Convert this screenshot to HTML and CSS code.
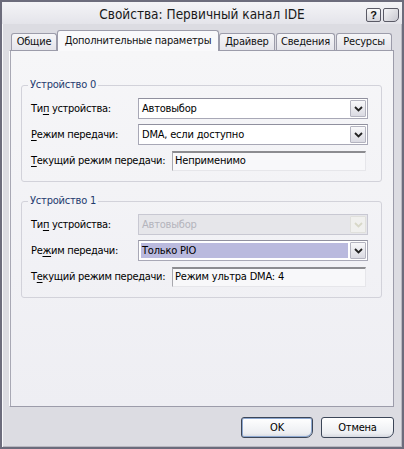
FILE: index.html
```html
<!DOCTYPE html>
<html lang="ru">
<head>
<meta charset="utf-8">
<title>Свойства: Первичный канал IDE</title>
<link rel="stylesheet" href="styles.css">
</head>
<body>
<div class="window">
  <div class="titlebar">
    <span></span>
    <span class="title">Свойства: Первичный канал IDE</span>
    <span class="tb-buttons">
      <span class="tb-btn help">?</span>
      <span class="tb-btn close"></span>
    </span>
  </div>
  <div class="tabs">
    <div class="tab">Общие</div>
    <div class="tab active">Дополнительные параметры</div>
    <div class="tab">Драйвер</div>
    <div class="tab">Сведения</div>
    <div class="tab">Ресурсы</div>
  </div>
  <div class="panel">
    <fieldset class="group">
      <legend>Устройство 0</legend>
      <div class="row">
        <span class="label">Ти<u>п</u> устройства:</span>
        <div class="combo"><span class="value">Автовыбор</span><span class="drop"><svg width="9" height="6" viewBox="0 0 9 6"><path d="M1 1 L4.5 4.5 L8 1" fill="none" stroke="#222" stroke-width="1.8"/></svg></span></div>
      </div>
      <div class="row">
        <span class="label"><u>Р</u>ежим передачи:</span>
        <div class="combo"><span class="value">DMA, если доступно</span><span class="drop"><svg width="9" height="6" viewBox="0 0 9 6"><path d="M1 1 L4.5 4.5 L8 1" fill="none" stroke="#222" stroke-width="1.8"/></svg></span></div>
      </div>
      <div class="row">
        <span class="label wide"><u>Т</u>екущий режим передачи:</span>
        <div class="field">Неприменимо</div>
      </div>
    </fieldset>
    <fieldset class="group">
      <legend>Устройство 1</legend>
      <div class="row">
        <span class="label">Ти<u>п</u> устройства:</span>
        <div class="combo disabled"><span class="value">Автовыбор</span><span class="drop"><svg width="9" height="6" viewBox="0 0 9 6"><path d="M1 1 L4.5 4.5 L8 1" fill="none" stroke="#d8d8c8" stroke-width="1.8"/></svg></span></div>
      </div>
      <div class="row">
        <span class="label">Ре<u>ж</u>им передачи:</span>
        <div class="combo selected"><span class="value">Только PIO</span><span class="drop"><svg width="9" height="6" viewBox="0 0 9 6"><path d="M1 1 L4.5 4.5 L8 1" fill="none" stroke="#222" stroke-width="1.8"/></svg></span></div>
      </div>
      <div class="row">
        <span class="label wide">Т<u>е</u>кущий режим передачи:</span>
        <div class="field">Режим ультра DMA: 4</div>
      </div>
    </fieldset>
  </div>
  <div class="buttons">
    <div class="btn default">OK</div>
    <div class="btn">Отмена</div>
  </div>
</div>
</body>
</html>
```

FILE: styles.css
```css
* { box-sizing: border-box; }
html, body { margin: 0; padding: 0; background: #fff; }
body { font-family: "DejaVu Sans Condensed", "Liberation Sans", Arial, sans-serif; font-size: 11px; color: #000; letter-spacing: -0.2px; }

.window {
  width: 404px;
  height: 449px;
  border: 2px solid #6c6c7c;
  box-shadow: inset 1px 1px 0 #fafafc, inset -1px -1px 0 #b8b8c0;
  background: #dcdce2;
  display: flex;
  flex-direction: column;
  padding: 0 8px 0 7px;
}

.titlebar {
  height: 22px;
  margin: 0 -8px 0 -7px;
  display: grid;
  grid-template-columns: 1fr auto 1fr;
  align-items: center;
  background: linear-gradient(#f4f4f7, #e4e4ea);
}
.title { font-size: 13.5px; color: #1a1a1a; padding-top: 2px; white-space: nowrap; letter-spacing: 0; }
.tb-buttons { display: flex; justify-content: flex-end; gap: 2px; padding-right: 3px; padding-top: 4px; }
.tb-btn {
  width: 15px; height: 14px;
  border: 1px solid #5a5a66;
  border-radius: 2px;
  background: linear-gradient(#fafafa, #d4d4da);
  font-family: "Liberation Sans", Arial, sans-serif;
  font-weight: bold; font-size: 11px; line-height: 12px;
  text-align: center; color: #111;
  letter-spacing: 0;
}
.tb-btn.close { width: 16px; border-radius: 2px 2px 5px 2px; background: linear-gradient(135deg, #f4f4f6, #c8c8d0); }

.tabs {
  margin-top: 6px;
  height: 20px;
  display: flex;
  align-items: flex-end;
  padding-left: 2px;
  position: relative;
  z-index: 1;
}
.tab {
  height: 17px;
  border: 1px solid #9c9caa;
  border-bottom: none;
  border-radius: 3px 3px 0 0;
  background: linear-gradient(#f6f6f8, #e4e4ea);
  font-size: 11px;
  line-height: 16px;
  color: #111;
  margin-right: 1px;
  white-space: nowrap;
  text-align: center;
  flex: none;
}
.tab:first-child { width: 46px; }
.tab.active {
  height: 21px;
  margin-bottom: -1px;
  width: 162px;
  margin-right: 0;
  background: #f9f9fb;
  line-height: 20px;
  margin-left: -1px;
}
.tab:nth-child(3) { width: 56px; }
.tab:nth-child(4) { width: 59px; }
.tab:nth-child(5) { width: 56px; margin-right: 0; }

.panel {
  height: 357px;
  border: 1px solid #9c9caa;
  border-left-color: #fbfbfd;
  box-shadow: inset 1px 0 0 #a8a8b4;
  background: linear-gradient(#f6f6f8, #eeeef3);
  padding: 27px 11px 0 11px;
}

.group {
  margin: 0 0 12px 0;
  border: 1px solid #d2d2da;
  border-radius: 3px;
  padding: 6px 13px 10px 9px;
  display: flex;
  flex-direction: column;
  gap: 5px;
}
.group legend {
  padding: 0 2px;
  margin-left: -3px;
  font-size: 11px;
  line-height: 14px;
  color: #1e3a6e;
}

.row { display: flex; align-items: center; height: 21px; }
.label { width: 107px; flex: none; font-size: 11px; white-space: nowrap; letter-spacing: -0.3px; }
.label.wide { width: 141px; }
.label u { text-decoration-thickness: 1px; text-underline-offset: 2px; }

.combo {
  flex: 1;
  height: 21px;
  border: 1px solid #a8a8b6;
  border-top-color: #90909e;
  background: #fff;
  display: flex;
  align-items: stretch;
}
.combo .value { flex: 1; padding-left: 3px; line-height: 19px; font-size: 11px; }
.combo .drop {
  width: 16px;
  margin: 1px;
  border: 1px solid #b4b4c0;
  border-radius: 1px;
  background: linear-gradient(#f8f8fa, #dadae2);
  display: flex;
  align-items: center;
  justify-content: center;
}
.combo.disabled { background: #e6e6ea; border-color: #c8c8d2; }
.combo.disabled .value { color: #b4b4bc; }
.combo.disabled .drop { background: #f0f0ee; border-color: #e0e0dc; }
.combo.selected .value { background: #babade; margin: 2px 1px 2px 2px; line-height: 15px; padding-left: 1px; }

.field {
  flex: 1;
  height: 20px;
  margin-right: 2px;
  border-top: 2px solid #8c8c90;
  border-left: 1px solid #a8a8ae;
  border-right: 1px solid #e6e6ea;
  border-bottom: 1px solid #e6e6ea;
  background: #f8f8fa;
  padding-left: 2px;
  line-height: 16px;
  font-size: 11px;
  white-space: nowrap;
}

.buttons {
  margin-top: 10px;
  display: flex;
  justify-content: flex-end;
  gap: 8px;
}
.btn {
  height: 21px;
  width: 73px;
  border: 1px solid #3c4658;
  border-radius: 3px 3px 7px 3px;
  background: linear-gradient(#ffffff, #eceef2 80%, #d6d8e0);
  text-align: center;
  font-size: 11px;
  line-height: 19px;
}
.btn.default { width: 72px; box-shadow: inset 0 0 0 1px #8ea8d0; }
```
